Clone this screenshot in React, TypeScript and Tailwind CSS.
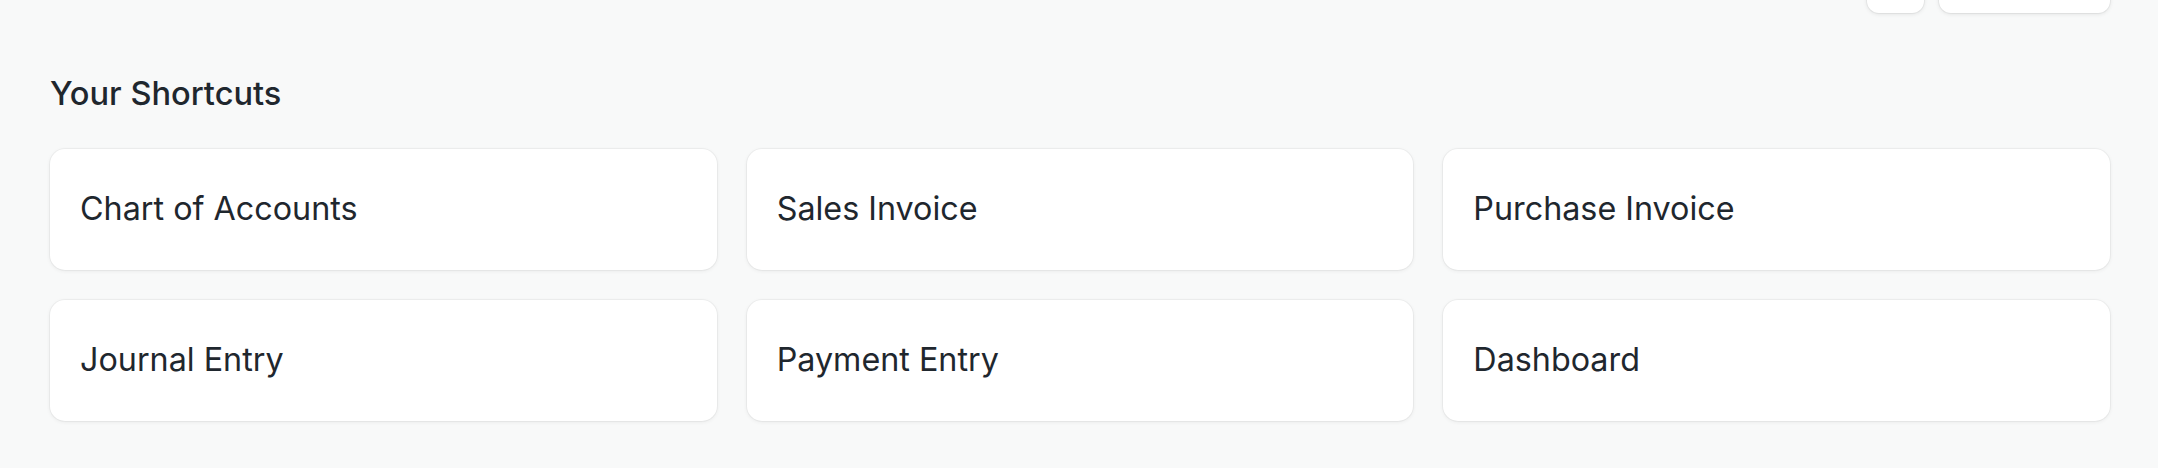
const shortcuts = [
  "Chart of Accounts",
  "Sales Invoice",
  "Purchase Invoice",
  "Journal Entry",
  "Payment Entry",
  "Dashboard"
];

function ShortcutCard({ label }: { label: string }) {
  return (
    <button className="flex h-[121px] items-center rounded-[15px] bg-white pl-[30px] text-left text-[32.3px] leading-none text-[#1f272e] shadow-[0_0_0_1px_rgba(0,0,0,0.035),0_1px_4px_rgba(0,0,0,0.07)]">
      {label}
    </button>
  );
}

export default function App() {
  return (
    <div className="min-h-[468px] bg-[#f8f9f9] font-['Inter','Noto_Sans',sans-serif] text-[#1f272e]">
      <div className="flex justify-end gap-[15px] pr-[48px]">
        <div className="-mt-[41px] h-[54px] w-[57px] rounded-[12px] bg-white shadow-[0_0_0_1px_rgba(0,0,0,0.04),0_1px_4px_rgba(0,0,0,0.1)]" />
        <div className="-mt-[41px] h-[54px] w-[171px] rounded-[12px] bg-white shadow-[0_0_0_1px_rgba(0,0,0,0.04),0_1px_4px_rgba(0,0,0,0.1)]" />
      </div>

      <h2 className="ml-[50px] mt-[62px] text-[32.6px] font-medium leading-[36px]">
        Your Shortcuts
      </h2>

      <div className="mt-[38px] grid grid-cols-3 gap-[30px] pl-[50px] pr-[48px]">
        {shortcuts.map((label) => (
          <ShortcutCard key={label} label={label} />
        ))}
      </div>
    </div>
  );
}
